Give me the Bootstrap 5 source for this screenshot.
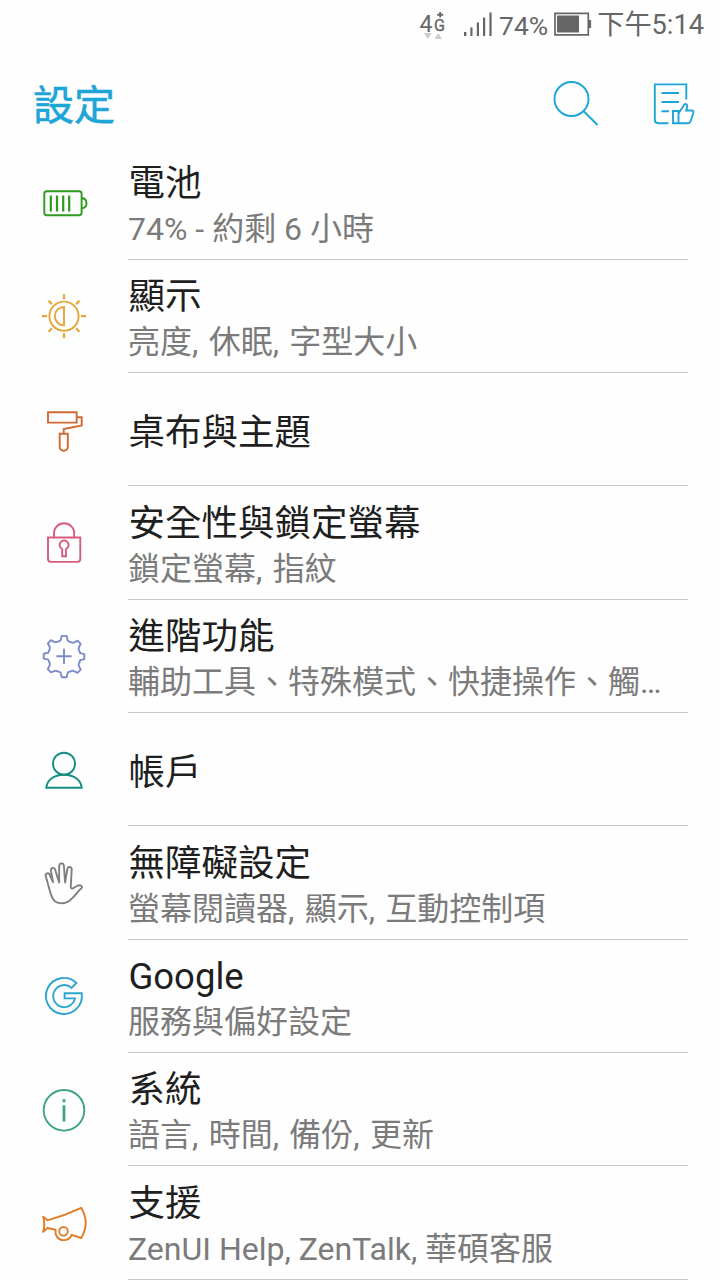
<!DOCTYPE html>
<html lang="zh-Hant-TW">
<head>
<meta charset="utf-8">
<meta name="viewport" content="width=device-width, initial-scale=1">
<title>設定</title>
<link href="https://cdn.jsdelivr.net/npm/bootstrap@5.3.0/dist/css/bootstrap.min.css" rel="stylesheet">
<style>
  html, body { height: 1280px; overflow: hidden; }
  body { width: 720px; background: #fefefe; font-family: Roboto, "Noto Sans CJK TC", sans-serif; color: #1f1f1f; }
  svg { display: block; flex: none; fill: none; stroke: currentColor; stroke-width: 1.9; }
  .status-bar { height: 50px; padding-right: 16px; font-size: 27.2px; line-height: 51px; color: #666; }
  .status-battery { margin-left: 5px; margin-right: 4px; }
  .status-percent { margin-left: 3.5px; font-size: 26.5px; }
  .app-bar { height: 96.3px; padding: 0 20px 0 33px; color: #1ea5d8; }
  .app-title { font-size: 41px; line-height: 60px; margin: 2px 0 0; font-weight: 400; -webkit-text-stroke: .6px; }
  .app-actions { margin-top: 25px; }
  .setting-row { height: 113.33px; }
  .icon-cell { width: 128px; padding-left: 30px; }
  .setting-text { width: 560px; padding-top: 7.5px; border-bottom: 1.4px solid #c9c9c9; white-space: nowrap; }
  .setting-title { font-size: 36.5px; line-height: 46px; padding-left: .4px; }
  .setting-sub { font-size: 32px; line-height: 45px; color: #7b7b7b; }
  .wide-space { word-spacing: 2.4px; }
  .c-battery { color: #2f9a1e; } .c-display { color: #e5a63a; } .c-theme { color: #cf6a33; }
  .c-lock { color: #d55c7d; } .c-advanced { color: #7f8bc8; } .c-account { color: #138e80; }
  .c-access { color: #7d817e; } .c-google { color: #2ea5cd; } .c-system { color: #3ba37b; } .c-support { color: #df7d27; }
</style>
</head>
<body>
<header>
  <div class="status-bar d-flex justify-content-end">
    <svg width="80" height="50" viewBox="414 0 80 50">
      <g fill="#666" stroke="none">
        <text x="418.5" y="31.5" font-size="24" textLength="13" lengthAdjust="spacingAndGlyphs">4</text>
        <text x="433" y="31" font-size="16.5" textLength="11" lengthAdjust="spacingAndGlyphs" stroke="#666" stroke-width=".4">G</text>
        <path d="M463 32h2.4v4H463zM469.3 27.5h2.2V36h-2.2zM475.800 22.500h2.200V36h-2.200zM482 17.500h2.200V36H482zM488.400 12.500h2.200V36h-2.200z"/>
      </g>
      <path d="M436.200 14.800h6M439.200 12v5.500" stroke="#666"/>
      <path d="M423 33h7.500l-3.700 6zM433.500 39h7.500l-3.700-6z" fill="#ccc" stroke="none"/>
    </svg>
    <span class="status-percent">74%</span>
    <svg class="status-battery" width="40" height="50" viewBox="553 0 40 50">
      <path d="M555 13.400h33.300v21.400H555z" stroke="#666" stroke-width="1.700"/>
      <path d="M557 15.500h22v17h-22zM588.500 20h2.600v8h-2.600z" fill="#666" stroke="none"/>
    </svg>
    <span>下午5:14</span>
  </div>
  <div class="app-bar d-flex justify-content-between">
    <h1 class="app-title pt-4">設定</h1>
    <svg class="app-actions" width="150" height="60" viewBox="550 75 150 60">
      <circle cx="571.500" cy="99" r="17"/><path d="M583.500 111l14 14"/>
      <path d="M686.300 99.500V84.400h-31.500v35.400q0 3.400 3.400 3.400h10.300M661.500 93H679M661.500 102H679M661.500 111.200h7.500"/>
      <path d="M673 111h5.500v12.200H673zM678.500 113.500l5.700-8.700q1.600-1.800 2.800.2.700 1.300-.9 5.500h6q1.800.3 1.300 2.200l-2.800 8.500q-.7 2-2.500 2h-9.600"/>
    </svg>
  </div>
</header>
<main>
  <div class="setting-row d-flex">
    <div class="icon-cell c-battery d-flex align-items-center"><svg width="70" height="70" viewBox="0 -2 70 70">
      <rect x="14.300" y="21.200" width="37.300" height="24" rx="2.500"/><path d="M20.800 25.500v16M27 25.500v16M33.200 25.500v16M39.200 25.500v16" stroke-width="2.200"/><path d="M51.600 28q4.900.5 4.900 5.200t-4.900 5.200"/></svg></div>
    <div class="setting-text d-flex flex-column justify-content-center"><div class="setting-title">電池</div><div class="setting-sub">74% - 約剩 6 小時</div></div>
  </div>
  <div class="setting-row d-flex">
    <div class="icon-cell c-display d-flex align-items-center"><svg width="70" height="70" viewBox="0 1.300 70 70">
      <circle cx="34" cy="36.500" r="14.600"/><path d="M34 27.300v18.400a9.200 9.200 0 0 1 0-18.400z"/><path d="M34 14.500v5M34 53.500v5M12 36.500h5M51 36.500h5M18.500 21l3.400 3.400M49.500 21l-3.400 3.400M18.500 52l3.400-3.400M49.500 52l-3.400-3.400" stroke-width="2.200"/></svg></div>
    <div class="setting-text d-flex flex-column justify-content-center"><div class="setting-title">顯示</div><div class="setting-sub wide-space">亮度, 休眠, 字型大小</div></div>
  </div>
  <div class="setting-row d-flex">
    <div class="icon-cell c-theme d-flex align-items-center"><svg width="70" height="70" viewBox="0 -.3 70 70">
      <path d="M18 17h28.700v10.300H18zM46.700 22h5v8.200l-18 3.500v4.800M29.700 38.500h8.100v12.800q0 4.200-4 4.200t-4.100-4.200z"/></svg></div>
    <div class="setting-text d-flex flex-column justify-content-center"><div class="setting-title">桌布與主題</div></div>
  </div>
  <div class="setting-row d-flex">
    <div class="icon-cell c-lock d-flex align-items-center"><svg width="70" height="70" viewBox="0 -2 70 70">
      <path d="M18 27.500h32.300v21.200q0 3.200-3.200 3.200H21.200q-3.200 0-3.200-3.200zM24 27.500v-4.200a10.100 10.100 0 0 1 20.200 0v4.200"/><path d="M32.200 46.300v-7.200a4.500 4.500 0 1 1 3.800 0v7.200z"/></svg></div>
    <div class="setting-text d-flex flex-column justify-content-center"><div class="setting-title">安全性與鎖定螢幕</div><div class="setting-sub wide-space">鎖定螢幕, 指紋</div></div>
  </div>
  <div class="setting-row d-flex">
    <div class="icon-cell c-advanced d-flex align-items-center"><svg width="70" height="70" viewBox="0 1.300 70 70">
      <path stroke-linejoin="round" d="M31.800 16.200h4.800l1.300 5.100 3.300 1.400q1.700.8 3-.1l3.300-1.700 3.200 3.200-1.700 3.200q-.8 1.600 0 3.100l1.200 3.100 4.100 1v4.900l-4.100 1-1.200 3.200q-.8 1.500 0 3l1.700 3.300-3.200 3.200-3.300-1.700q-1.400-.8-3 0l-3.300 1.300-1.300 4.800h-4.800l-1.300-4.800-3.300-1.300q-1.600-.8-3 0L21 52.600l-3.200-3.200 1.700-3.300q.8-1.500 0-3l-1.200-3.200-4.600-1V34l4.600-1 1.200-3.100q.8-1.500 0-3.100l-1.700-3.200 3.200-3.200 3.200 1.700q1.400.9 3 .1l3.300-1.300z"/><path d="M34 29v15.200M26.400 36.600h15.200"/></svg></div>
    <div class="setting-text d-flex flex-column justify-content-center"><div class="setting-title">進階功能</div><div class="setting-sub">輔助工具、特殊模式、快捷操作、觸…</div></div>
  </div>
  <div class="setting-row d-flex">
    <div class="icon-cell c-account d-flex align-items-center"><svg width="70" height="70" viewBox="0 -.3 70 70">
      <circle cx="34" cy="28.400" r="11"/><path d="M16.300 52.500c.6-7.200 7.100-13.100 17.700-13.100s17.100 5.900 17.700 13.100z"/></svg></div>
    <div class="setting-text d-flex flex-column justify-content-center"><div class="setting-title">帳戶</div></div>
  </div>
  <div class="setting-row d-flex">
    <div class="icon-cell c-access d-flex align-items-center"><svg width="70" height="70" viewBox="0 -2 70 70">
      <path stroke-linejoin="round" d="M20.300 42.500l-4.500-16.200c-.8-3 3-4.200 4-1.300l3.200 7.200-2-11.200c-.5-3.500 3.400-4.200 4.300-1.100l3.800 12.600.1-16.200c0-3.800 4.400-3.800 4.700-.3l1.200 16.500 2.200-13.400c.6-3.300 4.600-2.700 4.400.7l-1 17.500c1 3.300 3.700-.4 7.100-1.700 2.700-1 5.200.7 3.900 2.300-3.600 2.700-6 7.300-9.700 10.500q-4.200 4.800-9.500 4.800c-8.200 0-10.200-4.200-12.200-10.700z"/></svg></div>
    <div class="setting-text d-flex flex-column justify-content-center"><div class="setting-title">無障礙設定</div><div class="setting-sub wide-space">螢幕閱讀器, 顯示, 互動控制項</div></div>
  </div>
  <div class="setting-row d-flex">
    <div class="icon-cell c-google d-flex align-items-center"><svg width="70" height="70" viewBox="0 1.300 70 70">
      <path d="M46.400 23.300a18 18 0 1 0 5.300 10.200H34.600v5.200H45a11 11 0 1 1-3.400-10.500z"/></svg></div>
    <div class="setting-text d-flex flex-column justify-content-center"><div class="setting-title">Google</div><div class="setting-sub">服務與偏好設定</div></div>
  </div>
  <div class="setting-row d-flex">
    <div class="icon-cell c-system d-flex align-items-center"><svg width="70" height="70" viewBox="0 -.3 70 70">
      <circle cx="34" cy="35" r="20.300"/><path d="M34 30v16.300M34 24v3" stroke-width="2.700"/></svg></div>
    <div class="setting-text d-flex flex-column justify-content-center"><div class="setting-title">系統</div><div class="setting-sub wide-space">語言, 時間, 備份, 更新</div></div>
  </div>
  <div class="setting-row d-flex">
    <div class="icon-cell c-support d-flex align-items-center"><svg width="70" height="70" viewBox="0 -2 70 70">
      <path stroke-linejoin="round" d="M13.200 26.600l4.300 3.700Q35 25.500 51.200 17.800q9 15.200 0 30.200L41.600 44.800c-1.400 3.700-4.500 5.300-8 5.300-5.500 0-8.800-4.600-8-10.300l-8.100-1.800-4.300 3.900q2.200-7.700 0-15.300z"/><circle cx="33.500" cy="41.300" r="4.300"/></svg></div>
    <div class="setting-text d-flex flex-column justify-content-center"><div class="setting-title">支援</div><div class="setting-sub">ZenUI Help, ZenTalk, 華碩客服</div></div>
  </div>
</main>
<script src="https://cdn.jsdelivr.net/npm/bootstrap@5.3.0/dist/js/bootstrap.bundle.min.js"></script>
</body>
</html>
